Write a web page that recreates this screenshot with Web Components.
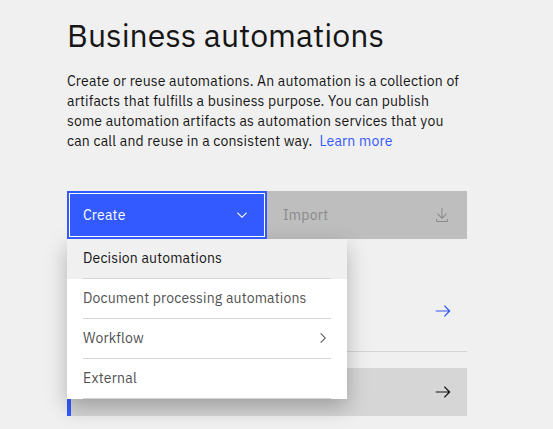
<!DOCTYPE html>
<html lang="en"><head><meta charset="utf-8"><title>Business automations</title>
<style>
html,body{margin:0;background:#f0f0f0;height:429px;overflow:hidden}
body{font-family:"IBM Plex Sans",Roboto,"Liberation Sans",sans-serif;color:#161616}
</style></head><body>
<automations-page></automations-page>
<script>
const define=(name,html,setup)=>customElements.define(name,class extends HTMLElement{
  connectedCallback(){
    if(this.shadowRoot)return;
    const t=document.createElement('template');t.innerHTML=html;
    this.attachShadow({mode:'open'}).append(t.content.cloneNode(true));
    if(setup)setup(this);
  }
});
// A single line of text whose tracking is set so that it spans the width in "span".
define('tracked-text','<style>:host{display:inline-block;white-space:pre}</style><slot></slot>',el=>{
  el.style.letterSpacing='0px';
  const w=el.getBoundingClientRect().width;
  el.style.letterSpacing=((+el.getAttribute('span')-w)/el.textContent.length)+'px';
});
define('ui-icon','<style>:host{display:block;flex:none}svg{display:block;fill:currentColor}</style><div></div>',el=>{
  el.shadowRoot.querySelector('div').innerHTML={
    down:'<svg width="16" height="16" viewBox="0 0 16 16"><path d="M8 11 3 6l.7-.7L8 9.6l4.3-4.3.7.7z"/></svg>',
    right:'<svg width="16" height="16" viewBox="0 0 16 16"><path d="m11 8-5 5-.7-.7L9.6 8 5.3 3.7 6 3z"/></svg>',
    arrow:'<svg width="20" height="20" viewBox="0 0 20 20"><path d="m11.8 4.2-.9.9 4.2 4.3H2.7v1.2h12.4l-4.2 4.3.9.9L17.5 10z"/></svg>',
    download:'<svg width="16" height="16" viewBox="0 0 32 32"><path d="M26 24v4H6v-4H4v4a2 2 0 0 0 2 2h20a2 2 0 0 0 2-2v-4zM26 14l-1.41-1.41L17 20.17V2h-2v18.17l-7.59-7.58L6 14l10 10z"/></svg>'
  }[el.getAttribute('name')];
});
define('page-intro',`<style>
:host{display:block;width:400px}
h1{margin:0;font-size:32px;line-height:40px;font-weight:400}
p{margin:16px 0 0;font-size:14px;line-height:20px;display:grid}
.row{display:flex;gap:7px;height:20px}a{color:#3459ff;text-decoration:none}
</style><h1><tracked-text span="317">Business automations</tracked-text></h1>
<p><span class="row"><tracked-text span="392">Create or reuse automations. An automation is a collection of</tracked-text></span>
<span class="row"><tracked-text span="362">artifacts that fulfills a business purpose. You can publish</tracked-text></span>
<span class="row"><tracked-text span="376.5">some automation artifacts as automation services that you</tracked-text></span>
<span class="row"><tracked-text span="245.5">can call and reuse in a consistent way.</tracked-text><a href="#"><tracked-text span="73">Learn more</tracked-text></a></span></p>`);
define('action-button',`<style>
:host{display:flex;box-sizing:border-box;width:200px;height:48px;padding:0 17px 0 16px;align-items:center;justify-content:space-between;font-size:14px;background:#bebebe;color:#8a8a8a}
:host([primary]){background:#325aff;color:#fff;border:2px solid #325aff;box-shadow:inset 0 0 0 1px #fff;padding:0 15px 0 14px;position:relative;z-index:2}
</style><slot></slot><slot name="icon"></slot>`);
define('menu-item',`<style>
:host{display:block;height:40px;box-sizing:border-box;padding:0 16px;color:#525252;font-size:14px}
:host([active]){background:#f0f0f0;color:#161616}
div{height:40px;box-sizing:border-box;padding-bottom:1px;border-bottom:1px solid #d4d4d4;display:flex;align-items:center;justify-content:space-between}
</style><div><slot></slot><slot name="icon"></slot></div>`);
define('create-menu',`<style>
:host{display:block;position:absolute;z-index:1;top:48px;left:0;width:280px;height:160px;background:#fff;box-shadow:0 8px 20px rgba(0,0,0,.26)}
</style><slot></slot>`);
define('link-row',`<style>
:host{display:flex;box-sizing:border-box;width:400px;align-items:center;justify-content:flex-end;padding-right:14px}
:host([plain]){height:81px;color:#3459ff;border-bottom:1px solid #d4d4d4}
:host([selected]){height:48px;margin-top:16px;background:#d6d6d6;border-left:4px solid #325aff}
</style><ui-icon name="arrow"></ui-icon>`);
define('automations-page',`<style>
:host{display:block;padding:15px 0 0 67px;height:414px;overflow:hidden}
.actions{display:flex;width:400px;margin-top:40px;position:relative}
.rows{padding-top:32px}
</style><page-intro></page-intro>
<div class="actions">
<action-button primary><tracked-text span="42.5">Create</tracked-text><ui-icon slot="icon" name="down"></ui-icon></action-button>
<action-button><tracked-text span="45.5">Import</tracked-text><ui-icon slot="icon" name="download"></ui-icon></action-button>
<create-menu>
<menu-item active><tracked-text span="139">Decision automations</tracked-text></menu-item>
<menu-item><tracked-text span="223.5">Document processing automations</tracked-text></menu-item>
<menu-item><tracked-text span="61">Workflow</tracked-text><ui-icon slot="icon" name="right"></ui-icon></menu-item>
<menu-item><tracked-text span="54">External</tracked-text></menu-item>
</create-menu></div>
<div class="rows"><link-row plain></link-row><link-row selected></link-row></div>`);
</script></body></html>
